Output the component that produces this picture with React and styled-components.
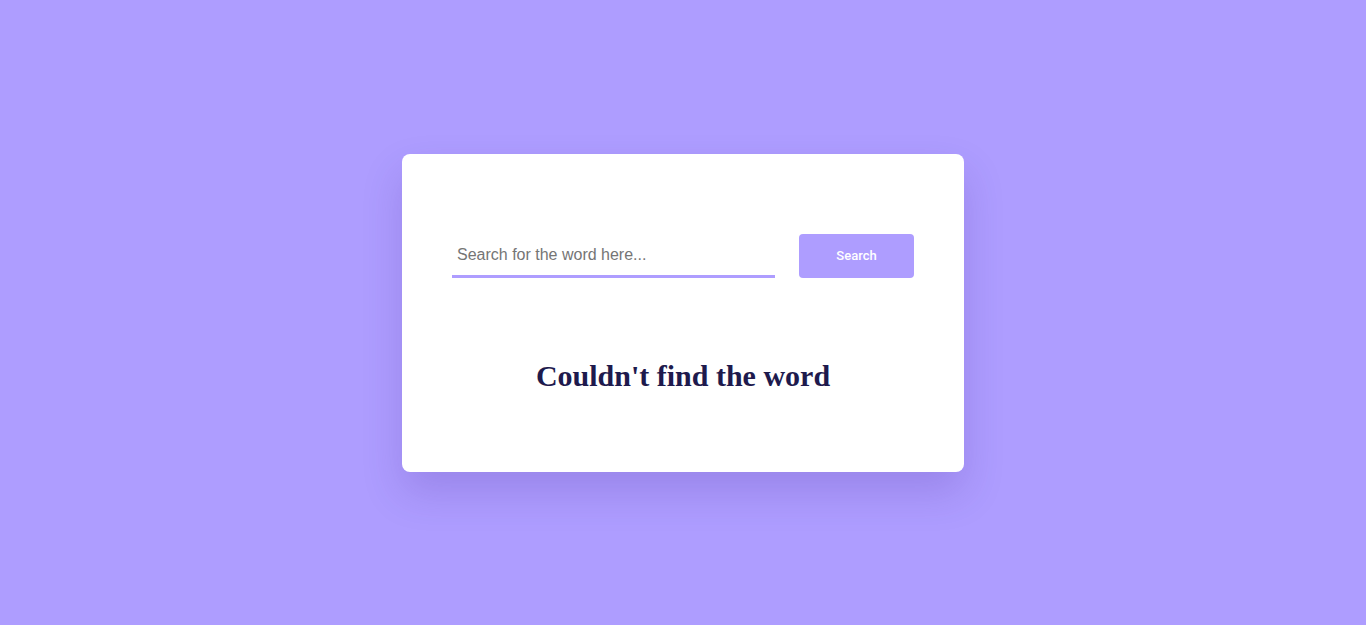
import styled, { createGlobalStyle } from "styled-components";

const GlobalStyle = createGlobalStyle`
  html, body {
    margin: 0;
    padding: 0;
    background: #ae9dff;
  }
`;

const Page = styled.main`
  min-height: 625px;
  display: flex;
  align-items: center;
  justify-content: center;
`;

const Card = styled.section`
  width: 562px;
  box-sizing: border-box;
  padding: 80px 50px 0;
  height: 318px;
  background: #fff;
  border-radius: 8px;
  box-shadow: 0 20px 40px rgba(60, 30, 140, 0.18);
`;

const SearchRow = styled.form`
  display: flex;
  align-items: stretch;
  gap: 24px;
  height: 44px;
`;

const SearchInput = styled.input`
  flex: 1;
  border: none;
  border-bottom: 3px solid #ae9dff;
  outline: none;
  padding: 2px 5px 0;
  font-family: Arial, "Liberation Sans", sans-serif;
  font-size: 16px;
  color: #333;
  &::placeholder {
    color: #757575;
  }
`;

const SearchButton = styled.button`
  width: 115px;
  border: none;
  border-radius: 4px;
  background: #ae9dff;
  color: #fff;
  font-family: Roboto, Arial, sans-serif;
  font-size: 13px;
  font-weight: 500;
  padding-top: 1px;
  cursor: pointer;
`;

const Message = styled.h1`
  margin: 81px 0 0;
  text-align: center;
  font-family: "Liberation Serif", "Times New Roman", serif;
  font-size: 30px;
  font-weight: bold;
  color: #1e1a4d;
`;

export default function App() {
  return (
    <>
      <GlobalStyle />
      <Page>
        <Card>
          <SearchRow onSubmit={(e) => e.preventDefault()}>
            <SearchInput type="text" placeholder="Search for the word here..." />
            <SearchButton type="submit">Search</SearchButton>
          </SearchRow>
          <Message>Couldn't find the word</Message>
        </Card>
      </Page>
    </>
  );
}
